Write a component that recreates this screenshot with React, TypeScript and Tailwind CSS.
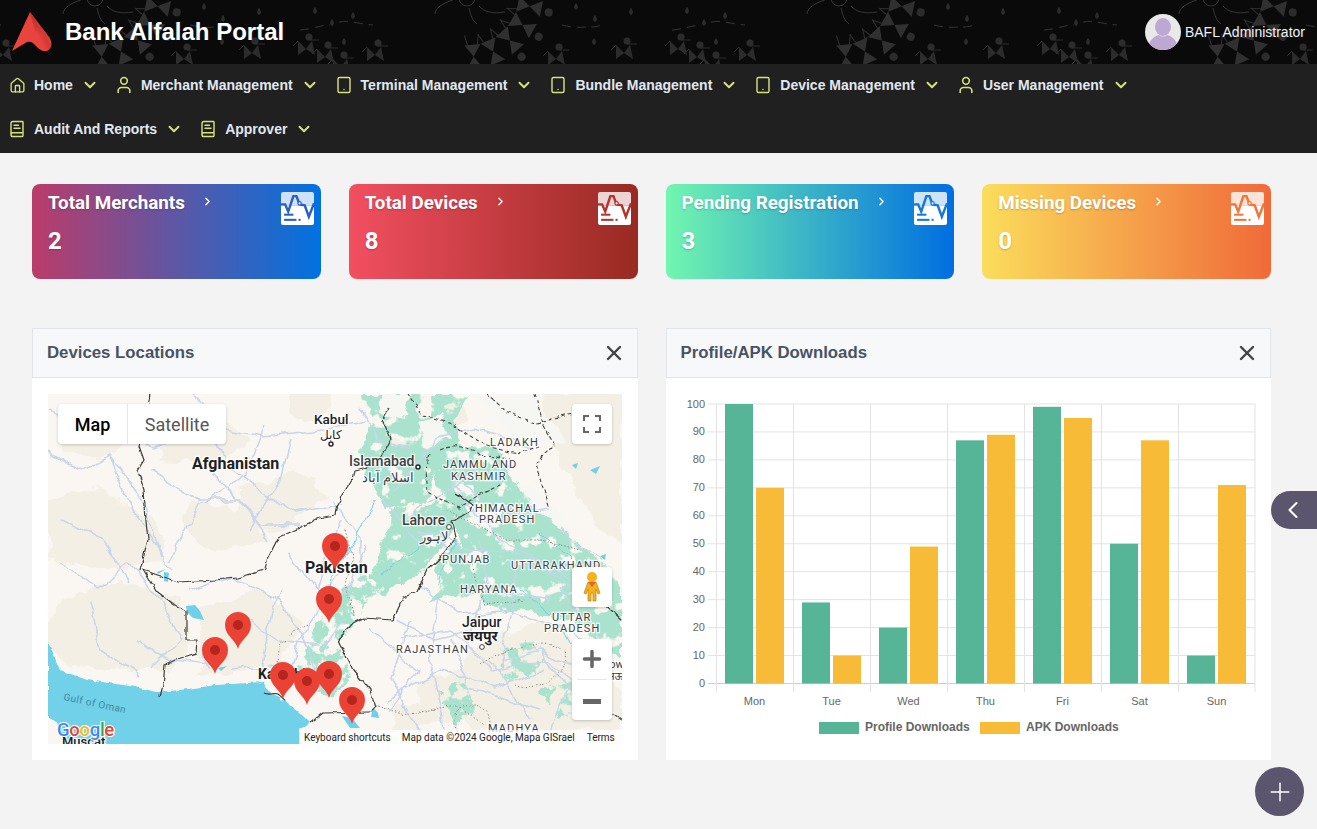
import { BookText, ChevronDown, ChevronLeft, ChevronRight, House, Plus, Tablet, User, X } from "lucide-react";

const navRows = [
  [
    { label: "Home", icon: House, size: 17 },
    { label: "Merchant Management", icon: User, size: 20 },
    { label: "Terminal Management", icon: Tablet, size: 18 },
    { label: "Bundle Management", icon: Tablet, size: 18 },
    { label: "Device Management", icon: Tablet, size: 18 },
    { label: "User Management", icon: User, size: 20 },
  ],
  [
    { label: "Audit And Reports", icon: BookText, size: 18 },
    { label: "Approver", icon: BookText, size: 18 },
  ],
];

const cards = [
  { title: "Total Merchants", value: "2", bg: "from-[#bb3c69] to-[#0072e0]", line: "#2a5fc4" },
  { title: "Total Devices", value: "8", bg: "from-[#f24f60] to-[#982a22]", line: "#b5342e" },
  { title: "Pending Registration", value: "3", bg: "from-[#72f6af] to-[#006ee1]", line: "#1479dc" },
  { title: "Missing Devices", value: "0", bg: "from-[#fbdd5c] to-[#f06a39]", line: "#f0763c" },
];

const days = ["Mon", "Tue", "Wed", "Thu", "Fri", "Sat", "Sun"];
const profile = [100, 29, 20, 87, 99, 50, 10];
const apk = [70, 10, 49, 89, 95, 87, 71];

function StatIcon({ color }: { color: string }) {
  return (
    <svg width="33" height="33" viewBox="0 0 32 32" className="shrink-0">
      <path d="M2 0h28a2 2 0 0 1 2 2v11H0V2a2 2 0 0 1 2-2z" fill="#fff" fillOpacity="0.8" />
      <path d="M0 13h32v17a2 2 0 0 1-2 2H2a2 2 0 0 1-2-2z" fill="#fff" />
      <path d="M0 12h4l3 7 5-15h3l3 8 5 1 4 11 5-13" fill="none" stroke={color} strokeWidth="2.4" />
      <circle cx="18" cy="11" r="1.6" fill="#fff" stroke={color} strokeWidth="1.2" />
      <rect x="3" y="21" width="9" height="2" fill={color} />
      <rect x="3" y="26" width="12" height="2" fill={color} />
      <rect x="17" y="26" width="2" height="2" fill={color} />
    </svg>
  );
}

// the faint folk-art pattern behind the top bar: dancers in a ring round a sun
function HeaderPattern() {
  const ring = [12, 30, 48, 66, 84, 102, 120, 138, 156, 174];
  const drops = [
    [34, 7],
    [51, 19],
    [72, 12],
    [63, 38],
    [295, 3],
    [314, 15],
    [313, 38],
    [350, 8],
  ];
  const dancers = [
    [22, 44],
    [41, 52],
    [57, 62],
    [91, 50],
    [272, 54],
    [340, 48],
  ];
  return (
    <svg className="absolute inset-0 h-full w-full" aria-hidden="true">
      <defs>
        <pattern id="warli" x="281" width="372" height="64" patternUnits="userSpaceOnUse">
          <g fill="none" stroke="#343434" strokeWidth="1">
            <circle cx="186" cy="-2" r="8" />
            <path d="M172 0c-10 3-18 8-18 14M188 8c2 8 3 12 8 16M198 6c5 6 14 8 26 6" />
            <path d="M19 30c14-1 20-5 30-5M58 22c10-2 20 2 34 3M281 25c8 2 16 3 24 2M310 27c5 0 8-1 12-2" strokeDasharray="9 6" />
          </g>
          {ring.map((a) => (
            <g key={a} transform={`translate(186 -7) rotate(${a - 90})`}>
              <path d="M42 -7L52 -5M42 7L52 5" stroke="#2e2e2e" strokeWidth="1" fill="none" />
              <path d="M52 -8L64 0 52 8zM76 -8L64 0 76 8z" fill="#303030" />
              <circle cx="84" cy="2" r="4" fill="#2c2c2c" />
            </g>
          ))}
          <g fill="#2c2c2c">
            {drops.map(([x, y]) => (
              <path key={`${x}-${y}`} d="M0 0c2 3 3 5 0 7c-3-2-2-4 0-7z" transform={`translate(${x} ${y})`} />
            ))}
            {dancers.map(([x, y]) => (
              <g key={`${x}-${y}`} transform={`translate(${x} ${y})`}>
                <circle cx="6" cy="-7" r="3.5" />
                <path d="M-5 -3L3 5l-8 6zM9 -3L3 5l9 6z" />
                <path d="M6 -4l10 0M-5 -3l-5 5" fill="none" stroke="#2c2c2c" />
              </g>
            ))}
          </g>
        </pattern>
      </defs>
      <rect width="100%" height="100%" fill="url(#warli)" />
    </svg>
  );
}

function Logo() {
  return (
    <svg width="42" height="42" viewBox="0 0 42 42" className="shrink-0">
      <defs>
        <linearGradient id="logoA" x1="0.15" y1="0.7" x2="0.95" y2="0.3">
          <stop offset="0" stopColor="#ea4640" />
          <stop offset="0.55" stopColor="#e8433c" />
          <stop offset="1" stopColor="#a92a26" />
        </linearGradient>
        <linearGradient id="logoB" x1="0" y1="0" x2="1" y2="1">
          <stop offset="0" stopColor="#b32a27" />
          <stop offset="1" stopColor="#ea4640" />
        </linearGradient>
      </defs>
      <path d="M19 1L38 26c4 6 3 12-2 14-5 1-8-2-11-5-3-4-6-5-9-4L1 40z" fill="url(#logoA)" />
      <path d="M19 1L38 26c2 3 2.700 6 2 9-3-8-9-14-16-15z" fill="url(#logoB)" opacity="0.7" />
    </svg>
  );
}

function Avatar() {
  return (
    <svg width="36" height="36" viewBox="0 0 36 36" className="shrink-0">
      <clipPath id="avatarClip">
        <circle cx="18" cy="18" r="18" />
      </clipPath>
      <circle cx="18" cy="18" r="18" fill="#e9e9ea" />
      <g clipPath="url(#avatarClip)" fill="#bca8d2">
        <ellipse cx="18" cy="13" rx="8" ry="9" />
        <path d="M3 36c0-9 6-14 11-15 2 2 6 2 8 0 5 1 11 6 11 15z" />
      </g>
    </svg>
  );
}

function Pin({ x, y }: { x: number; y: number }) {
  return (
    <g transform={`translate(${x} ${y})`}>
      <path d="M0 0C-2-9-13-13-13-24A13 13 0 1 1 13-24C13-13 2-9 0 0Z" fill="#ea4335" />
      <circle cx="0" cy="-24" r="5" fill="#b3261e" />
    </g>
  );
}

function MapLabel({ x, y, size = 14, weight = 400, color = "#3c4043", spacing = 0, children }: { x: number; y: number; size?: number; weight?: number; color?: string; spacing?: number; children: string }) {
  return (
    <text
      x={x}
      y={y}
      fontSize={size}
      fontWeight={weight}
      fill={color}
      letterSpacing={spacing}
      stroke="#fff"
      strokeOpacity="0.85"
      strokeWidth="2.5"
      paintOrder="stroke"
      className="font-['Roboto','Noto_Sans',sans-serif]"
    >
      {children}
    </text>
  );
}

const regions = [
  ["JAMMU AND", 443, 468],
  ["KASHMIR", 451, 480],
  ["LADAKH", 490, 446],
  ["HIMACHAL", 475, 512],
  ["PRADESH", 479, 523],
  ["PUNJAB", 442, 563],
  ["UTTARAKHAND", 511, 569],
  ["HARYANA", 460, 593],
  ["UTTAR", 552, 621],
  ["PRADESH", 544, 632],
  ["RAJASTHAN", 396, 653],
  ["MADHYA", 488, 732],
] as const;

const beige = [
  "M60 410l50-5 20 30-30 25-40-10zM160 430l60-15 30 25-40 25-50-5zM240 490l60-20 30 25-50 35-40-10z",
  "M48 500l50-15 60 40 10 35-60 10-60-10zM190 500l60 10 20 30-60 15-30-25z",
  "M60 600l60-20 60 15 10 50-20 25-100-5-30-25zM200 610l60-20 40 30-20 45-80 10z",
  "M470 650l70-30 50 30 32 50v30H470l-20-40zM420 680l40-10 10 50-50 5zM395 705l25 0 0 25-30 0z",
  "M545 394h77v150l-30-25-30-50-15-40z",
  "M430 400l25-5 15 25-30 10zM380 440l25 0 10 25-25 5zM290 394h40l-10 25-25 0z",
];

// mountains and plains of the north-east: dense, with small holes
const green = [
  "M352 394H468l-12 28 10 30-30 8-8 40-40 10-20-30-8-30 14-32z",
  "M432 452l64-6 25 46 40 36 36 30 25 30v74l-44-36-30-14-48-4-40-16-32 12 22-34 14-24-10-26-16-22z",
  "M396 508l54-8 5 30-28 36-40 28-20 4 8-30z",
  "M470 540l60 20 40 20 52 40v30l-60-30-60-20z",
];

// the Indus valley and scattered patches: thin and broken up
const sparseGreen = [
  "M345 590l30-25 25 5-30 30-20 30-25 25-12 30-16-4 12-40 20-30z",
  "M318 655l25-8 8 30-16 18-18-6z",
  "M500 650l30-10 15 20-15 25-25-5zM440 690l25-10 12 30-20 14zM540 690l35-10 15 25-30 15zM410 560l60-20-20 50z",
];

const snow = [
  "M470 394h68l26 48-36 6-36-34zM380 394h30l-5 25-25-5zM420 420l20-6 10 24-25 8z",
  "M520 480l32 25 18 26-36-20zM466 505l40 0-10 25-24-5z",
];

const roads = [
  "M48 410l30 20 40-10 35 28 50-22 60 10 60-6 40-10",
  "M48 450l32 20 30-15 30 40 20 60M110 455l22 55 40 60M60 520l40 20 30 40",
  "M195 394l20 30 10 40 40 30 30 20 50-10M150 470l50 30 40 0 30 40",
  "M210 470l50 55 40 0M265 425l-20 50-45 30-30 55M290 440l-10 40-30 50",
  "M60 560l40 30 30-30 30 40 20 40-30 30M90 600l10 50 40 25M135 640l35 20 40 5",
  "M190 590l40-15 50 25 30 50 10 40M250 620l30 20 40 5M230 670l60-5 20 20M200 640l10 30",
  "M320 600l-20 40-10 30M290 555l30 40 20-20M335 500l25 40 0 40M280 590l-15 50-5 30",
  "M420 585l40 30 50-5 60 20 40 30M400 640l50-10 40 40 60-10 30 30M395 620l40 20 40-10",
  "M410 620l-20 60 30 50M450 640l20 50 70 20M510 610l-10 60 30 50M480 600l-15 45 40 30M440 600l-10 60 15 70",
  "M450 480l30 40 40 30 50 40M420 530l50 20 60 5 60 40M480 540l10 50 60 10M520 560l-10 50M560 590l40 50",
  "M395 490l40-50 40-10 60 20M400 520l60-40 40 40 50-10M360 410l20 30 30 10M380 500l40 40 30 10",
  "M370 630l50 40-30 40M385 700l60-30 50 20 50-20M540 650l30 40-20 40M500 660l40-10 50 20",
  "M340 520l-15 40-10 40M365 545l-20 50M345 620l-25 30M560 530l40 30",
];

const dashed = [
  "M408 394l15 22 30 8 14 10 20 12 30 8 22-8M487 394l20 18 30 12 30-10 30-4",
  "M429 454c-4 10-3 30 0 40l30 14 18-12 25-12",
  "M440 450c10-5 30-5 40 5l30 4",
  "M535 394l8 30 12 20-20 20 5 15 10 30",
];

const dotted = [
  "M446 510l40 20 20 10 35 0 40 10",
  "M285 640c-12 10-8 30-3 50M288 635l20-10",
  "M345 530l8 30-8 25 10 30",
  "M375 705l30 10 50-10 30 20M470 560l15 45 40-5",
  "M480 665c25-20 80-30 85-10 5 20-30 40-50 30",
  "M458 735c-8-20 0-30 15-30 15 0 25 25 10 38",
];

function DeviceMap() {
  return (
    <div className="relative h-[350px] w-[574px] overflow-hidden bg-[#faf7f2]">
      <svg viewBox="48 394 574 350" width="574" height="350" className="block">
        <defs>
          <filter id="rough" x="-5%" y="-5%" width="110%" height="110%">
            <feTurbulence type="fractalNoise" baseFrequency="0.05" numOctaves="4" seed="7" />
            <feDisplacementMap in="SourceGraphic" scale="16" xChannelSelector="R" yChannelSelector="G" />
          </filter>
          <filter id="mottle" x="-5%" y="-5%" width="110%" height="110%" colorInterpolationFilters="sRGB">
            <feTurbulence type="fractalNoise" baseFrequency="0.06" numOctaves="4" seed="11" result="noise" />
            <feDisplacementMap in="SourceGraphic" in2="noise" scale="14" xChannelSelector="R" yChannelSelector="G" result="shape" />
            <feColorMatrix in="noise" type="matrix" values="0 0 0 0 0  0 0 0 0 0  0 0 0 0 0  12 0 0 0 -3.9" result="mask" />
            <feComposite in="shape" in2="mask" operator="in" />
          </filter>
          <filter id="mottleThin" x="-5%" y="-5%" width="110%" height="110%" colorInterpolationFilters="sRGB">
            <feTurbulence type="fractalNoise" baseFrequency="0.08" numOctaves="4" seed="23" result="noise" />
            <feDisplacementMap in="SourceGraphic" in2="noise" scale="14" xChannelSelector="R" yChannelSelector="G" result="shape" />
            <feColorMatrix in="noise" type="matrix" values="0 0 0 0 0  0 0 0 0 0  0 0 0 0 0  12 0 0 0 -5.2" result="mask" />
            <feComposite in="shape" in2="mask" operator="in" />
          </filter>
          <filter id="wavy" x="-5%" y="-5%" width="110%" height="110%">
            <feTurbulence type="fractalNoise" baseFrequency="0.04" numOctaves="3" seed="3" />
            <feDisplacementMap in="SourceGraphic" scale="12" xChannelSelector="R" yChannelSelector="G" />
          </filter>
          <filter id="jag" x="-5%" y="-5%" width="110%" height="110%">
            <feTurbulence type="fractalNoise" baseFrequency="0.12" numOctaves="2" seed="5" />
            <feDisplacementMap in="SourceGraphic" scale="5" xChannelSelector="R" yChannelSelector="G" />
          </filter>
        </defs>
        <g filter="url(#rough)">
          {beige.map((d, i) => (
            <path key={i} d={d} fill="#f3efe4" />
          ))}
        </g>
        <g fill="#a9e3cd" filter="url(#mottle)">
          {green.map((d, i) => (
            <path key={i} d={d} />
          ))}
        </g>
        <g fill="#a9e3cd" filter="url(#mottleThin)">
          {sparseGreen.map((d, i) => (
            <path key={i} d={d} />
          ))}
        </g>
        <g filter="url(#rough)">
          {snow.map((d, i) => (
            <path key={i} d={d} fill="#f6f7f3" />
          ))}
        </g>
        {/* Arabian Sea and lakes */}
        <g filter="url(#jag)">
          <path
            d="M48 642L60 670 87 680 130 686 157 692 180 690 217 685 263 682 270 693 283 700 297 710 310 723 300 730V750H67L63 737 57 723 48 717Z"
            fill="#6fd1e9"
          />
        </g>
        <path d="M264 693c6 3 10-1 14 1 3 2 5 5 7 6" fill="none" stroke="#333" strokeWidth="1.2" />
        <g fill="#6fd1e9">
          <path d="M186 606l9-1 5 6 4 9-11-2-6-6zM164 572l5 1-1 9-4-1zM157 572l9-3-8 5zM218 668l9-2-6 5z" />
          <path d="M342 716l10 2 8 10-10 0zM373 707l5 6 1 5-8-1z" />
          <path d="M572 465l6-2-2 6zM590 470l10-4-4 8zM600 556l6-2-1 6z" />
        </g>
        <g fill="none" stroke="#c8d5ea" strokeWidth="1.5" strokeLinejoin="round" filter="url(#wavy)">
          {roads.map((d, i) => (
            <path key={i} d={d} />
          ))}
        </g>
        <g fill="none" stroke="#74cfe6" strokeWidth="1" filter="url(#wavy)">
          <path d="M375 500l-20 40-25 40-6 30M420 545l-40 30M455 540l-15 40M540 530l30 30M520 590l40 30M560 625l10 20" />
        </g>
        {/* international borders */}
        <g fill="none" stroke="#3c3c3c" strokeWidth="1.2" strokeLinejoin="round" filter="url(#jag)">
          <path d="M150 394l-2 14 2 16-8 6-3 16 5 14-6 10 6 20 2 30 2 20-8 30" />
          <path d="M143 570l35 12 37-2 22-2 28-8 2-10 11-22 21-10 20-10 16-3 2-10 15-25 2-10 23-5 14-27-9-18 7-12" />
          <path d="M143 570l12 20 20 15 11 7v28h11l-1 13-21 7-10 5-2 20-3 12" />
          <path d="M455 492l18 13-3 6-18 11 3 16-15 20-13 12-10 22-14 6-10 22-30-2-10 5-15 17 15 30 17 20 5 17-5 5" />
          <path d="M370 712l-47 1-13 10" />
          <path d="M597 702l25 18M600 600l22 20" />
        </g>
        <g fill="none" stroke="#444" strokeWidth="1.1" strokeDasharray="4 2.5" filter="url(#jag)">
          {dashed.map((d, i) => (
            <path key={i} d={d} />
          ))}
        </g>
        <g fill="none" stroke="#8a8a8a" strokeWidth="1" strokeDasharray="1.5 2" filter="url(#jag)">
          {dotted.map((d, i) => (
            <path key={i} d={d} />
          ))}
        </g>
        <MapLabel x={192} y={469} size={16} weight={700} color="#202124">Afghanistan</MapLabel>
        <MapLabel x={314} y={424} size={13.5} weight={500} color="#202124">Kabul</MapLabel>
        <MapLabel x={320} y={439} size={12} color="#202124">کابل</MapLabel>
        <MapLabel x={349} y={466} size={14} weight={500}>Islamabad</MapLabel>
        <MapLabel x={362} y={482} size={13}>اسلام آباد</MapLabel>
        <MapLabel x={402} y={525} size={14} weight={500}>Lahore</MapLabel>
        <MapLabel x={420} y={541} size={13}>لاہور</MapLabel>
        <MapLabel x={305} y={573} size={16} weight={700} color="#202124">Pakistan</MapLabel>
        <MapLabel x={462} y={627} size={14} weight={500} color="#202124">Jaipur</MapLabel>
        <MapLabel x={463} y={641} size={14} weight={700} color="#202124">जयपुर</MapLabel>
        <MapLabel x={258} y={679} size={14} weight={700} color="#202124">Karachi</MapLabel>
        {regions.map(([name, x, y]) => (
          <MapLabel key={`${name}-${x}`} x={x} y={y} size={11} spacing={1.1}>{name}</MapLabel>
        ))}
        <MapLabel x={580} y={668} size={11}>Lucknow</MapLabel>
        <MapLabel x={592} y={680} size={11}>लखनऊ</MapLabel>
        <text x={63} y={700} fontSize="10" fill="#3b8aa0" transform="rotate(12 63 700)" className="font-['Roboto',sans-serif]" letterSpacing="0.4">Gulf of Oman</text>
        <MapLabel x={62} y={746} size={13} weight={500} color="#202124">Muscat</MapLabel>
        {[
          [335, 570],
          [329, 623],
          [238, 649],
          [215, 674],
          [283, 699],
          [329, 698],
          [307, 705],
          [352, 724],
        ].map(([x, y]) => (
          <Pin key={`${x}-${y}`} x={x} y={y} />
        ))}
        <circle cx="331" cy="444" r="2" fill="#fff" stroke="#222" strokeWidth="1.4" />
        <circle cx="418" cy="467" r="2" fill="#fff" stroke="#222" strokeWidth="1.4" />
        <circle cx="449" cy="527" r="2.4" fill="#fff" stroke="#444" />
        <circle cx="482" cy="647" r="2.4" fill="#fff" stroke="#444" />
        <text x={57} y={736} fontSize="18.500" fontWeight="500" stroke="#fff" strokeWidth="2" paintOrder="stroke" letterSpacing="-0.3" className="font-['Roboto',sans-serif]">
          <tspan fill="#4285f4">G</tspan>
          <tspan fill="#ea4335">o</tspan>
          <tspan fill="#fbbc05">o</tspan>
          <tspan fill="#4285f4">g</tspan>
          <tspan fill="#34a853">l</tspan>
          <tspan fill="#ea4335">e</tspan>
        </text>
      </svg>

      <div className="absolute left-[10px] top-[10px] flex h-10 overflow-hidden rounded-sm bg-white font-['Roboto',sans-serif] text-[18px] shadow-[0_1px_3px_rgba(0,0,0,0.2)]">
        <span className="flex w-[70px] items-center justify-center border-r border-[#e6e6e6] font-medium text-black">Map</span>
        <span className="flex w-[98px] items-center justify-center text-[#565656]">Satellite</span>
      </div>
      <div className="absolute right-[10px] top-[10px] flex h-10 w-10 items-center justify-center rounded-sm bg-white shadow-[0_1px_3px_rgba(0,0,0,0.2)]">
        <svg width="18" height="18" viewBox="0 0 18 18" fill="none" stroke="#666" strokeWidth="2">
          <path d="M1 6V1h5M12 1h5v5M17 12v5h-5M6 17H1v-5" />
        </svg>
      </div>
      <div className="absolute right-[10px] top-[173px] flex h-10 w-10 items-center justify-center rounded-sm bg-white shadow-[0_1px_3px_rgba(0,0,0,0.2)]">
        <svg width="18" height="30" viewBox="0 0 18 30">
          <circle cx="9" cy="5" r="5" fill="#f5b21a" />
          <path d="M5 10h8l4 11-2 1-2-5v12H10v-8H8v8H5V17l-2 5-2-1z" fill="#f5b21a" stroke="#b9801a" strokeWidth="0.7" />
          <path d="M5 10l4 5 4-5z" fill="#e0672a" />
        </svg>
      </div>
      <div className="absolute right-[10px] top-[245px] flex h-[81px] w-10 flex-col items-center rounded-sm bg-white shadow-[0_1px_3px_rgba(0,0,0,0.2)]">
        <Plus size={26} strokeWidth={3.2} className="mt-[7px] text-[#666]" />
        <div className="mt-[7px] h-px w-[30px] bg-[#e6e6e6]" />
        <div className="mt-[19px] h-[5px] w-[18px] bg-[#666]" />
      </div>
      <div className="absolute bottom-0 right-0 flex h-[14px] w-[323px] items-center bg-white/70 pl-[5px] font-['Roboto',sans-serif] text-[10px] text-[#222]">
        <span>Keyboard shortcuts</span>
        <span className="ml-[11px]">Map data ©2024 Google, Mapa GISrael</span>
        <span className="ml-[12px]">Terms</span>
      </div>
    </div>
  );
}

function DownloadsChart() {
  const x0 = 716.5;
  const step = 77;
  const yAt = (v: number) => 683.5 - v * 2.795;
  const ticks = [0, 10, 20, 30, 40, 50, 60, 70, 80, 90, 100];
  return (
    <svg viewBox="666 378 605 382" width="605" height="382" className="block font-['Liberation_Sans',Arial,sans-serif]">
      {ticks.map((t) => (
        <g key={t}>
          <line x1={708} x2={1255} y1={yAt(t)} y2={yAt(t)} stroke={t === 0 ? "#cfcfcf" : "#e3e3e3"} />
          <text x={705} y={yAt(t) + 3.500} textAnchor="end" fontSize="11" fill="#666">{t}</text>
        </g>
      ))}
      {days.map((d, i) => (
        <g key={d}>
          <line x1={x0 + step * i} x2={x0 + step * i} y1={404} y2={692} stroke="#e3e3e3" />
          <rect x={x0 + 8.5 + step * i} y={yAt(profile[i])} width={28} height={profile[i] * 2.795} fill="#55b596" />
          <rect x={x0 + 39.5 + step * i} y={yAt(apk[i])} width={28} height={apk[i] * 2.795} fill="#f7bb38" />
          <text x={x0 + 38 + step * i} y={705} textAnchor="middle" fontSize="11" fill="#666">{d}</text>
        </g>
      ))}
      <line x1={1255} x2={1255} y1={404} y2={692} stroke="#e3e3e3" />
      <rect x={819} y={722} width={40} height={12} fill="#55b596" />
      <text x={865} y={731} fontSize="12" fontWeight="700" fill="#666">Profile Downloads</text>
      <rect x={980} y={722} width={40} height={12} fill="#f7bb38" />
      <text x={1026} y={731} fontSize="12" fontWeight="700" fill="#666">APK Downloads</text>
    </svg>
  );
}

function Panel({ title, children }: { title: string; children: React.ReactNode }) {
  return (
    <section className="bg-white">
      <header className="flex h-[50px] items-center justify-between border border-[#e2e4e9] bg-[#f7f8fa] pb-[1px] pl-[14px] pr-[11px]">
        <h2 className="text-[16.8px] font-bold text-[#495263]">{title}</h2>
        <X size={24} strokeWidth={2.4} className="text-[#444]" />
      </header>
      {children}
    </section>
  );
}

export default function App() {
  return (
    <div className="relative h-[829px] w-[1317px] overflow-hidden bg-[#f3f3f3] font-['Liberation_Sans',Arial,sans-serif]">
      <header className="relative flex h-16 items-center justify-between bg-[#0a0a0a] pl-[11px] pr-[12px]">
        <HeaderPattern />
        <div className="relative flex items-center gap-[12px]">
          <Logo />
          <span className="text-[24px] font-bold text-white">Bank Alfalah Portal</span>
        </div>
        <div className="relative flex items-center gap-1">
          <Avatar />
          <span className="text-[14px] text-[#eef2f7]">BAFL Administrator</span>
        </div>
      </header>

      <nav className="h-[89px] bg-[#202020]">
        {navRows.map((row, r) => (
          <div key={r} className="flex h-[44px] items-center pb-[2px]">
            {row.map(({ label, icon: Icon, size }) => (
              <div key={label} className="flex items-center px-[10px]">
                <span className="mr-[10px] flex w-[14px] justify-center">
                  <Icon size={size} strokeWidth={1.9} className="shrink-0 text-[#d6e27b]" />
                </span>
                <span className="text-[14px] font-bold text-[#e2e8f0]">{label}</span>
                <ChevronDown size={18} strokeWidth={2.6} className="-mr-[2px] ml-[8px] text-[#d6e27b]" />
              </div>
            ))}
          </div>
        ))}
      </nav>

      <main className="px-[32px] pt-[31px]">
        <div className="grid grid-cols-4 gap-[28px] pr-[14px]">
          {cards.map((c) => (
            <div key={c.title} className={`flex h-[95px] justify-between rounded-lg bg-linear-to-r/srgb pl-4 pr-[7px] pt-[8px] ${c.bg}`}>
              <div className="-mt-[3px]">
                <div className="flex items-center font-['Roboto',sans-serif] text-[18.8px] font-bold text-white [text-shadow:0_1px_2px_rgba(0,0,0,0.22)]">
                  {c.title}
                  <ChevronRight size={13} strokeWidth={2.5} className="-mt-1 ml-[16px]" />
                </div>
                <div className="mt-[6px] font-['Roboto',sans-serif] text-[24px] font-bold text-white [text-shadow:0_1px_2px_rgba(0,0,0,0.22)]">{c.value}</div>
              </div>
              <StatIcon color={c.line} />
            </div>
          ))}
        </div>

        <div className="mt-[49px] grid grid-cols-2 gap-[28px] pr-[14px]">
          <Panel title="Devices Locations">
            <div className="p-4">
              <DeviceMap />
            </div>
          </Panel>
          <Panel title="Profile/APK Downloads">
            <DownloadsChart />
          </Panel>
        </div>
      </main>

      <button type="button" className="absolute right-0 top-[491px] flex h-[38px] w-[46px] items-center rounded-l-full bg-[#5b566e] pl-[8px] text-white">
        <ChevronLeft size={28} strokeWidth={1.8} />
      </button>
      <button type="button" className="absolute right-[13px] top-[767px] flex h-[49px] w-[49px] items-center justify-center rounded-full bg-[#5b566e] text-white">
        <Plus size={30} strokeWidth={1.2} />
      </button>
    </div>
  );
}
